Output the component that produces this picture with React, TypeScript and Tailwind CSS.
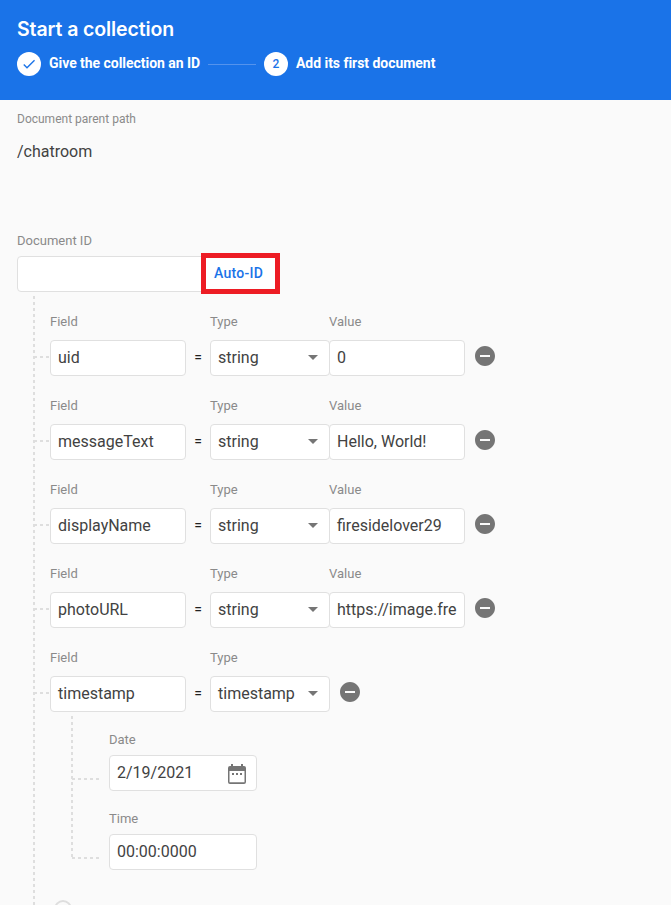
import React from "react";

const DASH_V =
  "bg-[repeating-linear-gradient(to_bottom,#dedede_0px,#dedede_3px,transparent_3px,transparent_6px)]";
const DASH_H =
  "bg-[repeating-linear-gradient(to_right,#dedede_0px,#dedede_3px,transparent_3px,transparent_6px)]";

type Row = { field: string; type: string; value?: string };

const rows: Row[] = [
  { field: "uid", type: "string", value: "0" },
  { field: "messageText", type: "string", value: "Hello, World!" },
  { field: "displayName", type: "string", value: "firesidelover29" },
  { field: "photoURL", type: "string", value: "https://image.fre" },
  { field: "timestamp", type: "timestamp" },
];

function Label({ children }: { children: React.ReactNode }) {
  return <div className="h-5 text-[13px] leading-5 text-[#8a8a8a]">{children}</div>;
}

function Box({ className, children }: { className: string; children?: React.ReactNode }) {
  return (
    <div
      className={`flex h-9 items-center overflow-hidden rounded-[4px] border border-[#e0e0e0] bg-white pl-[7px] text-base whitespace-nowrap text-[#424242] ${className}`}
    >
      {children}
    </div>
  );
}

function RemoveButton() {
  return (
    <button className="mt-8 ml-2 size-6 self-start">
      <svg viewBox="0 0 24 24" className="size-6" fill="#757575">
        <path d="M12 2C6.48 2 2 6.48 2 12s4.480 10 10 10 10-4.480 10-10S17.520 2 12 2zm5 11H7v-2h10v2z" />
      </svg>
    </button>
  );
}

function FieldRow({ row }: { row: Row }) {
  return (
    <div className="flex h-[84px]">
      <div className={`mt-11 mr-px h-0.5 w-[15px] ${DASH_H}`} />
      <div className="w-[136px]">
        <Label>Field</Label>
        <Box className="mt-2">{row.field}</Box>
      </div>
      <div className="mt-[27px] flex h-9 w-6 items-center justify-center text-sm text-[#212121]">=</div>
      <div className="w-[120px]">
        <Label>Type</Label>
        <Box className="mt-2 justify-between pr-[11px]">
          <span>{row.type}</span>
          <svg viewBox="0 0 10 5" className="mb-px h-[5px] w-[10px]" fill="#757575">
            <path d="M0 0h10L5 5z" />
          </svg>
        </Box>
      </div>
      {row.value !== undefined && (
        <div className="-ml-px w-[136px]">
          <Label>Value</Label>
          <Box className="mt-2">{row.value}</Box>
        </div>
      )}
      <RemoveButton />
    </div>
  );
}

function TimestampEditor() {
  return (
    <div className="ml-[37px] flex">
      <div className={`h-[142px] w-0.5 ${DASH_V}`} />
      <div className="pt-[14px]">
        <div className="flex h-[79px]">
          <div className={`mt-12 mr-[10px] -ml-px h-0.5 w-[27px] ${DASH_H}`} />
          <div className="w-[148px]">
            <Label>Date</Label>
            <Box className="mt-[5px] justify-between pr-[7px]">
              <span>2/19/2021</span>
              <svg viewBox="0 0 24 24" className="mt-0.5 size-6" fill="#757575">
                <path d="M19 4h-1V2h-2v2H8V2H6v2H5a2 2 0 0 0-2 2v14a2 2 0 0 0 2 2h14a2 2 0 0 0 2-2V6a2 2 0 0 0-2-2zM19.500 20.300H4.500V9h15z" />
                <path d="M7 11h2v2H7zM11 11h2v2h-2zM15 11h2v2h-2z" />
              </svg>
            </Box>
          </div>
        </div>
        <div className="flex">
          <div className={`mt-12 mr-[10px] -ml-px h-0.5 w-[27px] ${DASH_H}`} />
          <div className="w-[148px]">
            <Label>Time</Label>
            <Box className="mt-[5px]">00:00:0000</Box>
          </div>
        </div>
      </div>
    </div>
  );
}

function Header() {
  return (
    <header className="h-[100px] bg-[#1a73e8] pt-[17px] pl-[17px] text-white">
      <h1 className="h-6 font-['Inter',sans-serif] text-[19.5px] leading-6 font-semibold tracking-[-0.1px]">
        Start a collection
      </h1>
      <div className="mt-[11px] flex h-6 items-center text-sm font-bold tracking-[-0.04px]">
        <div className="flex size-6 items-center justify-center rounded-full bg-white">
          <svg viewBox="0 0 24 24" className="size-4" fill="#1a73e8">
            <path d="M9 16.170 4.830 12l-1.420 1.410L9 19 21 7l-1.410-1.410z" />
          </svg>
        </div>
        <span className="ml-2 h-6 w-[151px] leading-[22px] whitespace-nowrap">Give the collection an ID</span>
        <div className="mx-2 h-px w-12 bg-[#5493ed]" />
        <div className="flex size-6 items-center justify-center rounded-full bg-white text-xs font-medium text-[#1a73e8]">
          2
        </div>
        <span className="ml-2 h-6 leading-[22px] whitespace-nowrap">Add its first document</span>
      </div>
    </header>
  );
}

export default function App() {
  return (
    <div className="h-[905px] w-[671px] overflow-hidden bg-[#fafafa] font-['Roboto',sans-serif]">
      <Header />
      <main>
        <div className="pl-[17px]">
          <div className="pt-[9px] text-xs leading-5 text-[#8a8a8a]">Document parent path</div>
          <div className="mt-[11px] text-base leading-6 text-[#424242]">/chatroom</div>
          <div className="mt-[67px] text-[13px] leading-5 text-[#8a8a8a]">Document ID</div>
          <div className="relative mt-[5px] h-9 w-[262px]">
            <Box className="w-[262px]" />
            <div className="absolute -top-[3px] left-[184px] flex h-[41px] w-[79px] items-center border-[5px] border-[#ed1c24] bg-white pb-0.5 pl-2 text-sm font-medium tracking-[0.25px] text-[#1a73e8]">
              Auto-ID
            </div>
          </div>
        </div>
        <div className="mt-1 ml-[33px] flex">
          <div className={`h-[613px] w-0.5 ${DASH_V}`} />
          <div className="-ml-px pt-4">
            {rows.map((row) => (
              <FieldRow key={row.field} row={row} />
            ))}
            <div className="-mt-4">
              <TimestampEditor />
            </div>
            <div className="mt-[30px] ml-5 size-[18px] rounded-full border-2 border-[#dedede]" />
          </div>
        </div>
      </main>
    </div>
  );
}
